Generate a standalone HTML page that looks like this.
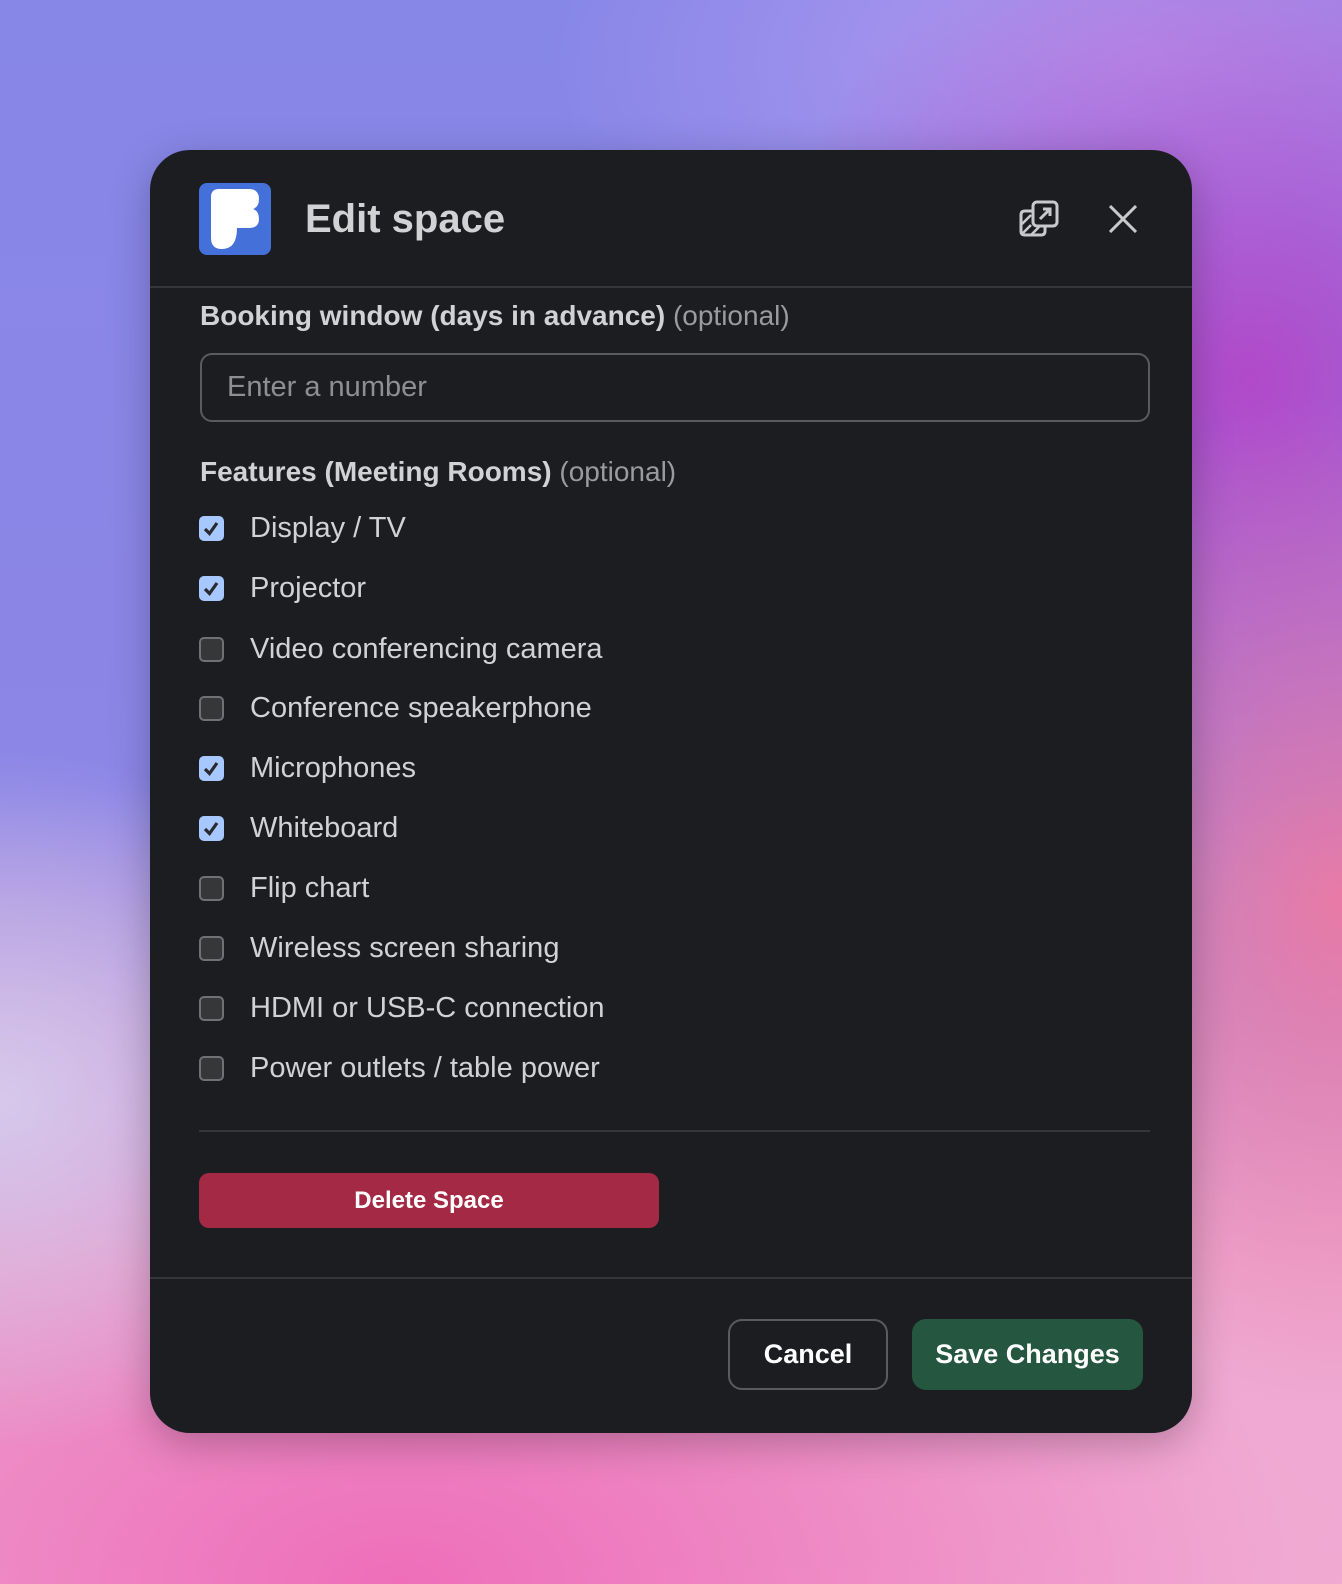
<!DOCTYPE html>
<html><head><meta charset="utf-8"><style>
*{box-sizing:border-box;margin:0;padding:0}
body{width:1342px;height:1584px;overflow:hidden;font-family:"Liberation Sans",sans-serif;position:relative;
background:
radial-gradient(ellipse 420px 500px at 1342px 900px, rgba(240,120,160,0.9), transparent),
radial-gradient(ellipse 500px 500px at 1250px 380px, rgba(180,70,200,0.95), transparent),
radial-gradient(ellipse 600px 300px at 1150px 60px, rgba(185,155,240,0.9), transparent),
radial-gradient(ellipse 400px 350px at 0px 1100px, rgba(215,200,235,1), transparent),
radial-gradient(ellipse 900px 500px at 400px 1584px, rgba(238,110,185,1), transparent),
radial-gradient(ellipse 700px 500px at 1200px 1500px, rgba(240,170,210,1), transparent),
linear-gradient(180deg,#8787e8 0%,#8c86e6 50%,#e7a2cc 80%,#f0a8d4 100%);}
.dlg{position:absolute;left:150px;top:150px;width:1042px;height:1283px;background:#1c1d21;border-radius:40px;box-shadow:0 10px 40px rgba(0,0,0,0.25);overflow:hidden}
.logo{position:absolute;left:49px;top:33px;width:72px;height:72px;background:#4470d9;border-radius:8px}
.title{position:absolute;left:155px;top:40px;font-size:40px;font-weight:bold;color:#d1d2d3;line-height:58px}
.hline{position:absolute;left:0;right:0;height:2px;background:#35363a}
.lbl{position:absolute;left:50px;font-size:28px;font-weight:bold;color:#d1d2d3;line-height:36px}
.lbl span{font-weight:normal;color:#9a9b9d}
.input{position:absolute;left:50px;top:203px;width:950px;height:69px;border:2px solid #5a5b5e;border-radius:12px;font-size:29px;color:#8e8f92;padding-left:25px;line-height:65px}
.row{position:absolute;left:49px;height:36px;display:flex;align-items:center}
.cb{width:25px;height:25px;border-radius:5px;border:2px solid #707174;background:#363739;margin-right:26px;flex:none;position:relative}
.cb.on{background:#a6c8ff;border-color:#a6c8ff}
.cb.on svg{position:absolute;left:0px;top:0px}
.row span{font-size:29px;color:#d1d2d3}
.del{position:absolute;left:49px;top:1023px;width:460px;height:55px;background:#a32944;border-radius:10px;color:#fff;font-weight:bold;font-size:24px;text-align:center;line-height:55px}
.btn{position:absolute;top:1169px;height:71px;border-radius:14px;font-weight:bold;font-size:27px;text-align:center;line-height:67px;color:#fff}
</style></head><body>
<div class="dlg">
 <div class="logo"><svg width="72" height="72" viewBox="0 0 72 72"><path d="M12 14 Q12 6 20 6 H50 Q60 6 60 16 Q60 24 54 26 Q60 28 60 36 Q60 45 50 45 H38 Q38 66 23 66 Q12 66 12 55 Z" fill="#fff"/></svg></div>
 <div class="title">Edit space</div>
 <svg style="position:absolute;left:869px;top:50px" width="40" height="38" viewBox="0 0 40 38" fill="none" stroke="#c8c9ca" stroke-width="3"><rect x="14" y="2" width="24" height="24" rx="4"/><path d="M21 19 L31 9 M24 9 H31 V16"/><path d="M14 11 H6 Q2 11 2 15 V31 Q2 35 6 35 H22 Q26 35 26 31 V26"/><path d="M3 24 L12 15 M4 33 L12 25 M12 35 L20 27" stroke-width="2.5"/></svg>
 <svg style="position:absolute;left:959px;top:55px" width="28" height="28" viewBox="0 0 28 28" stroke="#c8c9ca" stroke-width="3"><path d="M1 1 L27 27 M27 1 L1 27"/></svg>
 <div class="hline" style="top:136px"></div>
 <div class="lbl" style="top:148px">Booking window (days in advance) <span>(optional)</span></div>
 <div class="input">Enter a number</div>
 <div class="lbl" style="top:304px">Features (Meeting Rooms) <span>(optional)</span></div>
 <div class="row" style="top:360px"><div class="cb on"><svg width="21" height="21" viewBox="0 0 21 21"><path d="M4 11 L8.5 15.5 L16 5" fill="none" stroke="#2a2a2e" stroke-width="3.2"/></svg></div><span>Display / TV</span></div>
 <div class="row" style="top:420px"><div class="cb on"><svg width="21" height="21" viewBox="0 0 21 21"><path d="M4 11 L8.5 15.5 L16 5" fill="none" stroke="#2a2a2e" stroke-width="3.2"/></svg></div><span>Projector</span></div>
 <div class="row" style="top:481px"><div class="cb"></div><span>Video conferencing camera</span></div>
 <div class="row" style="top:540px"><div class="cb"></div><span>Conference speakerphone</span></div>
 <div class="row" style="top:600px"><div class="cb on"><svg width="21" height="21" viewBox="0 0 21 21"><path d="M4 11 L8.5 15.5 L16 5" fill="none" stroke="#2a2a2e" stroke-width="3.2"/></svg></div><span>Microphones</span></div>
 <div class="row" style="top:660px"><div class="cb on"><svg width="21" height="21" viewBox="0 0 21 21"><path d="M4 11 L8.5 15.5 L16 5" fill="none" stroke="#2a2a2e" stroke-width="3.2"/></svg></div><span>Whiteboard</span></div>
 <div class="row" style="top:720px"><div class="cb"></div><span>Flip chart</span></div>
 <div class="row" style="top:780px"><div class="cb"></div><span>Wireless screen sharing</span></div>
 <div class="row" style="top:840px"><div class="cb"></div><span>HDMI or USB-C connection</span></div>
 <div class="row" style="top:900px"><div class="cb"></div><span>Power outlets / table power</span></div>
 <div class="hline" style="top:980px;left:49px;right:42px"></div>
 <div class="del">Delete Space</div>
 <div class="hline" style="top:1127px"></div>
 <div class="btn" style="left:578px;width:160px;border:2px solid #5a5b5e">Cancel</div>
 <div class="btn" style="left:762px;width:231px;background:#245640;line-height:71px">Save Changes</div>
</div>
</body></html>
